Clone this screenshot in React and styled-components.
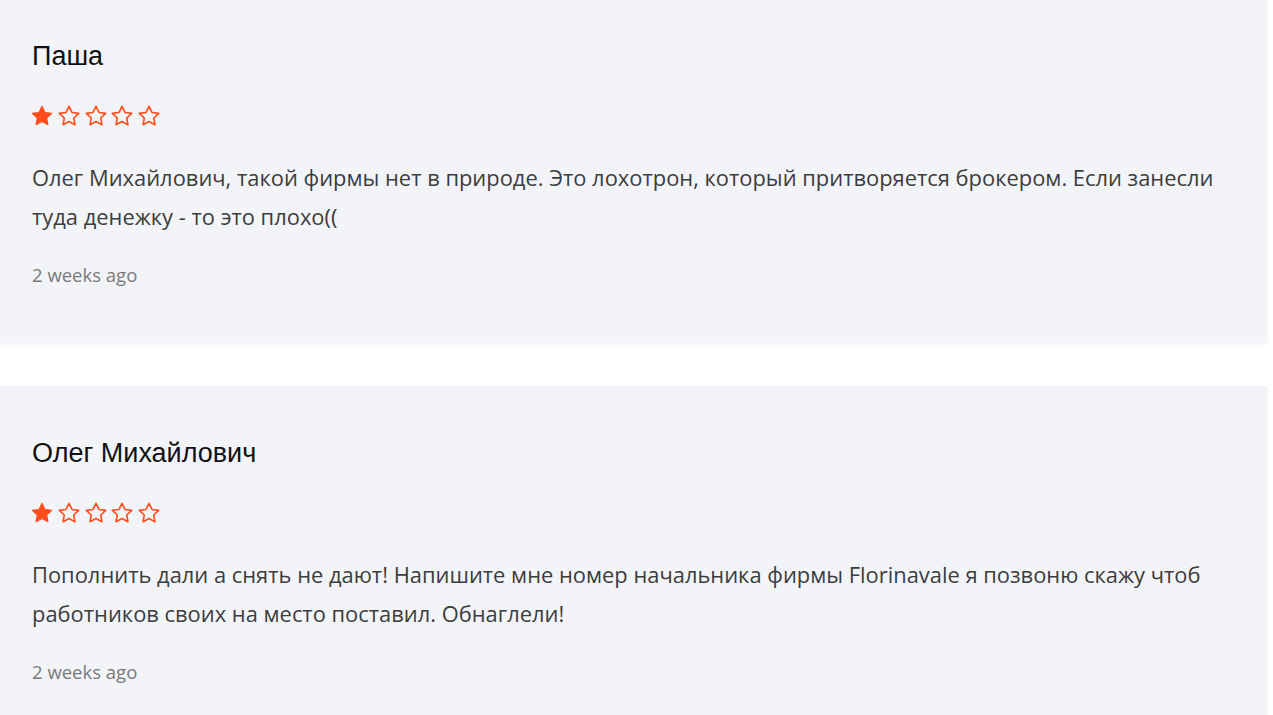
import React from 'react'
import styled, { createGlobalStyle } from 'styled-components'

const GlobalStyle = createGlobalStyle`
  html, body {
    margin: 0;
    padding: 0;
    background: #ffffff;
  }
  body {
    font-family: "Open Sans", "Liberation Sans", sans-serif;
    overflow: hidden;
  }
`

const List = styled.div`
  display: flex;
  flex-direction: column;
  gap: 44px;
  margin-top: -11px;
  width: 1267px;
`

const Card = styled.article`
  background: #f3f4f8;
  box-shadow: 0 2px 4px rgba(0, 0, 0, 0.06);
  padding: 52px 32px 40px;
  height: 353px;
  box-sizing: border-box;
`

const Name = styled.h3`
  margin: 0;
  font-family: "Liberation Sans", Arial, sans-serif;
  font-weight: 400;
  font-size: 27px;
  line-height: 30px;
  color: #111;
`

const Stars = styled.div`
  display: flex;
  gap: 4.75px;
  margin-top: 34px;
  margin-left: -1px;
  height: 22px;
  align-items: center;
`

const Text = styled.p`
  margin: 31px 0 0;
  font-size: 21.9px;
  line-height: 39px;
  color: #3d3d3d;
`

const Date = styled.div`
  margin-top: 27px;
  font-size: 18.5px;
  line-height: 24px;
  color: #7a7a7a;
`

const STAR = 'M10 1.2l2.7 5.6 6.1.8-4.5 4.2 1.1 6.1L10 15l-5.4 2.9 1.1-6.1-4.5-4.2 6.1-.8z'

const Star = ({ filled }) => (
  <svg width="22" height="22" viewBox="0 0 20 20">
    <path
      d={STAR}
      fill={filled ? '#ff4d1c' : 'none'}
      stroke="#ff4d1c"
      strokeWidth={filled ? 1 : 1.5}
      strokeLinejoin="round"
    />
  </svg>
)

const reviews = [
  {
    name: 'Паша',
    rating: 1,
    text: 'Олег Михайлович, такой фирмы нет в природе. Это лохотрон, который притворяется брокером. Если занесли туда денежку - то это плохо((',
    date: '2 weeks ago',
  },
  {
    name: 'Олег Михайлович',
    rating: 1,
    text: 'Пополнить дали а снять не дают! Напишите мне номер начальника фирмы Florinavale я позвоню скажу чтоб работников своих на место поставил. Обнаглели!',
    date: '2 weeks ago',
  },
]

export default function App() {
  return (
    <>
      <GlobalStyle />
      <List>
        {reviews.map((r, i) => (
          <Card key={i}>
            <Name>{r.name}</Name>
            <Stars>
              {[0, 1, 2, 3, 4].map(n => <Star key={n} filled={n < r.rating} />)}
            </Stars>
            <Text>{r.text}</Text>
            <Date>{r.date}</Date>
          </Card>
        ))}
      </List>
    </>
  )
}
